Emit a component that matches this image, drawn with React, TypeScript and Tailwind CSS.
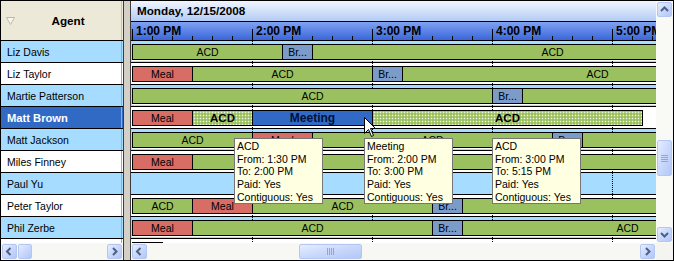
import React from "react";

type Kind = "acd" | "meal" | "br" | "meet" | "acdsel";
type Seg = [Kind, number, number, string];

const KIND: Record<Kind, string> = {
  acd: "bg-[#9bc05f] text-[10.5px]",
  meal: "bg-[#d76d65] text-[10.5px]",
  br: "bg-[#7b9bc9] text-[10.5px]",
  meet: "bg-[#316ac5] text-[12px] font-bold text-[#00103a]",
  acdsel:
    "bg-[#9bc05f] bg-[radial-gradient(circle,rgba(255,255,255,0.85)_0.7px,transparent_1.1px)] bg-[length:3px_3px] text-[11.5px] font-bold",
};

const ROWS: { name: string; blue: boolean; sel?: boolean; segs: Seg[] }[] = [
  { name: "Liz Davis", blue: true, segs: [["acd", 0, 1.25, "ACD"], ["br", 1.25, 1.5, "Br..."], ["acd", 1.5, 5.5, "ACD"]] },
  { name: "Liz Taylor", blue: false, segs: [["meal", 0, 0.5, "Meal"], ["acd", 0.5, 2, "ACD"], ["br", 2, 2.25, "Br..."], ["acd", 2.25, 5.5, "ACD"]] },
  { name: "Martie Patterson", blue: true, segs: [["acd", 0, 3, "ACD"], ["br", 3, 3.25, "Br..."], ["acd", 3.25, 6, "ACD"]] },
  { name: "Matt Brown", blue: false, sel: true, segs: [["meal", 0, 0.5, "Meal"], ["acdsel", 0.5, 1, "ACD"], ["meet", 1, 2, "Meeting"], ["acdsel", 2, 4.25, "ACD"]] },
  { name: "Matt Jackson", blue: true, segs: [["acd", 0, 1, "ACD"], ["meal", 1, 1.5, "Meal"], ["acd", 1.5, 3.5, "ACD"], ["br", 3.5, 3.75, "Br..."], ["acd", 3.75, 5.5, "ACD"]] },
  { name: "Miles Finney", blue: false, segs: [["meal", 0, 0.5, "Meal"], ["acd", 0.5, 4.5, "ACD"]] },
  { name: "Paul Yu", blue: true, segs: [] },
  { name: "Peter Taylor", blue: false, segs: [["acd", 0, 0.5, "ACD"], ["meal", 0.5, 1, "Meal"], ["acd", 1, 2.5, "ACD"], ["br", 2.5, 2.75, "Br..."], ["acd", 2.75, 7, "ACD"]] },
  { name: "Phil Zerbe", blue: true, segs: [["meal", 0, 0.5, "Meal"], ["acd", 0.5, 2.5, "ACD"], ["br", 2.5, 2.75, "Br..."], ["acd", 2.75, 5.5, "ACD"]] },
  { name: "", blue: false, segs: [["br", 0, 0.25, ""]] },
];

const TIPS = [
  { left: 233, lines: ["ACD", "From: 1:30 PM", "To: 2:00 PM", "Paid: Yes", "Contiguous: Yes"] },
  { left: 363, lines: ["Meeting", "From: 2:00 PM", "To: 3:00 PM", "Paid: Yes", "Contiguous: Yes"] },
  { left: 491, lines: ["ACD", "From: 3:00 PM", "To: 5:15 PM", "Paid: Yes", "Contiguous: Yes"] },
];

function Arrow({ dir }: { dir: "up" | "down" | "left" | "right" }) {
  const d =
    dir === "left"
      ? "M5.5 1 L2 4.5 L5.5 8"
      : dir === "right"
      ? "M3 1 L6.5 4.5 L3 8"
      : dir === "up"
      ? "M1 6 L4.5 2.5 L8 6"
      : "M1 3 L4.5 6.5 L8 3";
  return (
    <svg width="9" height="9" viewBox="0 0 9 9">
      <path d={d} fill="none" stroke="#4d6185" strokeWidth="2" />
    </svg>
  );
}

function Btn({ children }: { children?: React.ReactNode }) {
  return (
    <div className="w-[17px] h-[17px] p-px shrink-0">
      <div className="w-full h-full rounded-[2px] border border-[#b4c7f3] bg-linear-to-br from-[#e6edff] via-[#c9d8fc] to-[#b3c7f6] flex items-center justify-center">
        {children}
      </div>
    </div>
  );
}

function GripH() {
  return (
    <div className="flex gap-px">
      <div className="w-px h-[7px] bg-[#8ea4e4]" />
      <div className="w-px h-[7px] bg-[#8ea4e4]" />
      <div className="w-px h-[7px] bg-[#8ea4e4]" />
      <div className="w-px h-[7px] bg-[#8ea4e4]" />
    </div>
  );
}

function GripV() {
  return (
    <div className="flex flex-col gap-px">
      <div className="h-px w-[7px] bg-[#8ea4e4]" />
      <div className="h-px w-[7px] bg-[#8ea4e4]" />
      <div className="h-px w-[7px] bg-[#8ea4e4]" />
      <div className="h-px w-[7px] bg-[#8ea4e4]" />
    </div>
  );
}

export default function App() {
  const ticks = Array.from({ length: 27 }, (_, i) => i);
  const hours = ["1:00 PM", "2:00 PM", "3:00 PM", "4:00 PM", "5:00 PM"];
  return (
    <div className="relative w-[674px] h-[261px] border border-black bg-white flex overflow-hidden font-['Liberation_Sans',Arial,sans-serif] text-black">
      {/* Left panel */}
      <div className="w-[122px] h-full flex flex-col shrink-0">
        <div className="relative h-[40px] shrink-0 border-b border-black bg-[#ece9d8] flex items-center">
          <div className="pl-[5px] w-[14px] flex items-center">
            <svg width="9" height="8" viewBox="0 0 9 8">
              <path d="M0.5 0.5 L8.5 0.5 L4.5 7.5 Z" fill="#f7f6f0" stroke="#bdb9a8" strokeWidth="1" />
            </svg>
          </div>
          <div className="flex-1 text-center font-bold text-[11.7px] leading-[12px] pr-[2px]">Agent</div>
          <div className="absolute right-[1px] top-0 bottom-0 w-px bg-[#c6c2b2]" />
        </div>
        <div className="h-[202px] shrink-0 overflow-hidden">
          {ROWS.map((r, i) => (
            <div
              key={i}
              className={`h-[22px] border-b border-black flex ${
                r.sel ? "bg-[#316ac5] text-white" : r.blue ? "bg-[#a6dcff]" : "bg-white"
              }`}
            >
              <div
                className={`w-[120px] pl-[6px] pt-[2px] flex items-center whitespace-nowrap ${
                  r.sel ? "font-bold text-[11.2px]" : "text-[10.5px]"
                }`}
              >
                {r.name}
              </div>
              <div className="w-px bg-[#a9a9a9]" />
            </div>
          ))}
        </div>
        <div className="h-[17px] shrink-0 flex bg-[#f7f7f3]">
          <Btn>
            <Arrow dir="left" />
          </Btn>
          <div className="w-[14px] h-[17px] py-px">
            <div className="w-full h-full rounded-[2px] border border-[#b4c7f3] bg-linear-to-br from-[#e6edff] via-[#c9d8fc] to-[#b3c7f6]" />
          </div>
          <div className="flex-1" />
          <Btn>
            <Arrow dir="right" />
          </Btn>
        </div>
      </div>

      {/* Splitter */}
      <div className="w-px bg-[#3c3c3c] shrink-0" />
      <div className="w-[6px] bg-[#d4d0c8] shrink-0" />
      <div className="w-px bg-[#3c3c3c] shrink-0" />

      {/* Right panel */}
      <div className="w-[525px] h-full flex flex-col shrink-0 overflow-hidden">
        <div className="h-[21px] shrink-0 border-b border-black bg-linear-to-b from-[#f1f6fe] to-[#b3ccf4] flex items-center pl-[6px]">
          <span className="font-bold text-[11.7px] leading-[12px] whitespace-nowrap">Monday, 12/15/2008</span>
        </div>
        <div className="relative h-[19px] shrink-0 border-b border-black bg-linear-to-b from-[#7fa2f1] to-[#3b65d9]">
          {ticks.map((i) => (
            <div
              key={i}
              className={`absolute bottom-0 w-px bg-black ${i % 6 === 0 ? "h-[11px]" : "h-[4px]"}`}
              style={{ left: 1 + 20 * i }}
            />
          ))}
          {hours.map((h, i) => (
            <span
              key={h}
              className="absolute top-[3px] font-bold text-[12px] leading-[12px] whitespace-nowrap"
              style={{ left: 5 + 120 * i }}
            >
              {h}
            </span>
          ))}
        </div>
        <div className="h-[202px] shrink-0 overflow-hidden">
          {ROWS.map((r, i) => (
            <div key={i} className={`relative h-[22px] border-b border-black ${r.blue ? "bg-[#a6dcff]" : "bg-white"}`}>
              {[121, 241, 361, 481].map((x) => (
                <div key={x} className="absolute top-0 bottom-0 border-l border-dotted border-black" style={{ left: x }} />
              ))}
              {r.segs.map(([k, s, e, label], j) => (
                <React.Fragment key={j}>
                  <div
                    className="absolute top-[19px] h-px bg-white"
                    style={{ left: 1 + 120 * s, width: 120 * (e - s) + 1 }}
                  />
                  <div
                    className={`absolute top-[3px] h-[16px] border border-black flex items-center justify-center overflow-hidden leading-[12px] ${KIND[k]}`}
                    style={{ left: 1 + 120 * s, width: 120 * (e - s) + 1 }}
                  >
                    <span className="whitespace-nowrap">{label}</span>
                  </div>
                </React.Fragment>
              ))}
            </div>
          ))}
        </div>
        <div className="relative h-[17px] shrink-0 flex bg-[#f7f7f3]">
          <Btn>
            <Arrow dir="left" />
          </Btn>
          <div className="w-[151px]" />
          <div className="w-[63px] h-[17px] py-px">
            <div className="w-full h-full rounded-[2px] border border-[#b4c7f3] bg-linear-to-br from-[#e6edff] via-[#c9d8fc] to-[#b3c7f6] flex items-center justify-center">
              <GripH />
            </div>
          </div>
          <div className="flex-1" />
          <Btn>
            <Arrow dir="right" />
          </Btn>
        </div>
      </div>

      {/* Vertical scrollbar */}
      <div className="w-[17px] h-full flex flex-col shrink-0">
        <div className="h-[242px] flex flex-col bg-[#f9f9f6]">
          <Btn>
            <Arrow dir="up" />
          </Btn>
          <div className="h-[122px]" />
          <div className="h-[36px] px-px">
            <div className="w-full h-full rounded-[2px] border border-[#b4c7f3] bg-linear-to-br from-[#e6edff] via-[#c9d8fc] to-[#b3c7f6] flex items-center justify-center">
              <GripV />
            </div>
          </div>
          <div className="flex-1" />
          <Btn>
            <Arrow dir="down" />
          </Btn>
        </div>
        <div className="h-[17px] bg-[#f4f4f0]" />
      </div>

      {/* Tooltips */}
      {TIPS.map((t) => (
        <div
          key={t.left}
          className="absolute top-[137px] w-[89px] h-[66px] border border-[#767676] bg-[#ffffe1] pl-[2px] pt-[1px] text-[10.5px] leading-[12.7px] whitespace-nowrap"
          style={{ left: t.left }}
        >
          {t.lines.map((l) => (
            <div key={l}>{l}</div>
          ))}
        </div>
      ))}

      {/* Cursor */}
      <svg className="absolute left-[363px] top-[116px]" width="13" height="21" viewBox="0 0 13 21">
        <path
          d="M0.5 0.5 L0.5 16.5 L4.5 12.5 L7.5 19.5 L9.5 18.5 L6.5 11.5 L11.5 11.5 Z"
          fill="white"
          stroke="black"
          strokeWidth="1"
        />
      </svg>
    </div>
  );
}
